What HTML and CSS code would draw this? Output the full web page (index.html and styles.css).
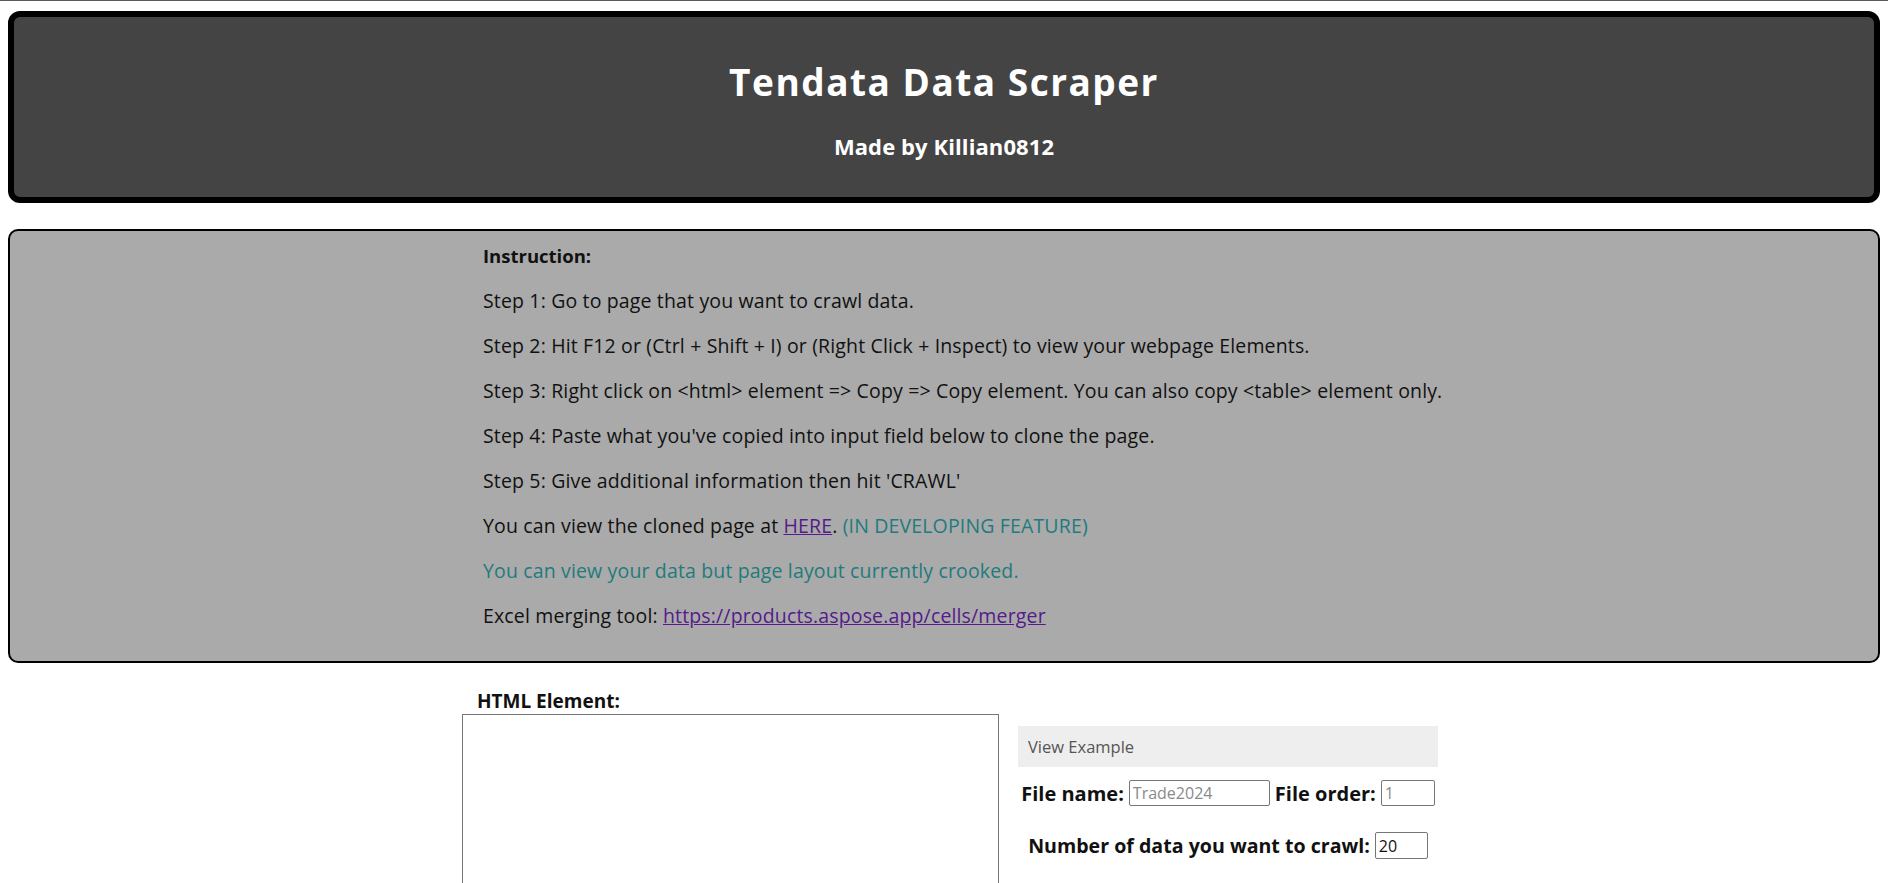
FILE: index.html
```html
<!DOCTYPE html>
<html lang="en">
<head>
<meta charset="utf-8">
<title>Tendata Data Scraper</title>
<link rel="stylesheet" href="styles.css">
</head>
<body>
<div class="frame">
  <header class="banner">
    <h1 class="title">Tendata Data Scraper</h1>
    <h3 class="byline">Made by Killian0812</h3>
  </header>

  <section class="guide">
    <div class="guide-inner">
      <p class="guide-head">Instruction:</p>
      <p>Step 1: Go to page that you want to crawl data.</p>
      <p>Step 2: Hit F12 or (Ctrl + Shift + I) or (Right Click + Inspect) to view your webpage Elements.</p>
      <p>Step 3: Right click on &lt;html&gt; element =&gt; Copy =&gt; Copy element. You can also copy &lt;table&gt; element only.</p>
      <p>Step 4: Paste what you've copied into input field below to clone the page.</p>
      <p>Step 5: Give additional information then hit 'CRAWL'</p>
      <p>You can view the cloned page at <a class="link" href="#">HERE</a>. <span class="note">(IN DEVELOPING FEATURE)</span></p>
      <p class="note">You can view your data but page layout currently crooked.</p>
      <p>Excel merging tool: <a class="link" href="#">https://products.aspose.app/cells/merger</a></p>
    </div>
  </section>

  <section class="form">
    <div class="html-col">
      <label class="field-label" for="html">HTML Element:</label>
      <textarea class="html-input" id="html"></textarea>
    </div>
    <div class="side">
      <div class="example">View Example</div>
      <div class="row">
        <label class="row-label">File name:</label>
        <input class="box box-name" type="text" placeholder="Trade2024">
        <label class="row-label">File order:</label>
        <input class="box box-order" type="text" placeholder="1">
      </div>
      <div class="row row-count">
        <label class="row-label label-count">Number of data you want to crawl:</label>
        <input class="box box-count" type="text" value="20">
      </div>
    </div>
  </section>
</div>
</body>
</html>
```

FILE: styles.css
```css
html, body {
  margin: 0;
  padding: 0;
  background: #ffffff;
}

body {
  font-family: "Open Sans", "Noto Sans", sans-serif;
  color: #111111;
  overflow: hidden;
}

.frame {
  border-top: 1px solid #5a5a5a;
  padding: 10px 8px 0 8px;
}

.banner {
  background: #444444;
  border: 6px solid #000000;
  border-radius: 12px;
  height: 180px;
  box-sizing: content-box;
  display: flex;
  flex-direction: column;
  align-items: center;
  padding: 0;
}

.title {
  margin: 43px 0 0 0;
  font-size: 37px;
  line-height: 44px;
  font-weight: 700;
  color: #ffffff;
  letter-spacing: 1.5px;
}

.byline {
  margin: 27px 0 0 0;
  font-size: 22px;
  line-height: 30px;
  font-weight: 700;
  color: #ffffff;
  letter-spacing: 0.1px;
}

.guide {
  margin-top: 26px;
  background: #aaaaaa;
  border: 2px solid #000000;
  border-radius: 10px;
  padding: 12px 0 13px 0;
}

.guide-inner {
  width: 922px;
  margin: 0 auto;
}

.guide-inner p {
  margin: 0 0 20px 0;
  font-size: 19.5px;
  line-height: 25px;
  letter-spacing: 0.15px;
  white-space: nowrap;
}

.guide-inner .guide-head {
  font-weight: 700;
  font-size: 18.5px;
  letter-spacing: 0;
}

.note {
  color: #1f7b7d;
}

.link {
  color: #551a8b;
  text-decoration: underline;
}

.form {
  width: 976px;
  margin: 26px auto 0 auto;
  padding-left: 12px;
  display: flex;
  align-items: flex-start;
  gap: 19px;
}

.html-col {
  display: flex;
  flex-direction: column;
  width: 537px;
}

.field-label {
  font-weight: 700;
  font-size: 19px;
  line-height: 25px;
  padding-left: 15px;
}

.html-input {
  box-sizing: border-box;
  width: 537px;
  height: 320px;
  border: 1px solid #767676;
  resize: none;
  margin: 0;
}

.side {
  width: 420px;
  margin-top: 37px;
}

.example {
  background: #eeeeee;
  height: 41px;
  line-height: 41px;
  padding-left: 10px;
  font-size: 16.5px;
  color: #555555;
}

.row {
  display: flex;
  justify-content: center;
  align-items: center;
  gap: 5px;
  margin-top: 13px;
  height: 26px;
}

.row-count {
  margin-top: 26px;
  height: 27px;
}

.row-label {
  font-weight: 700;
  font-size: 20px;
  line-height: 25px;
}

.label-count {
  font-size: 19.6px;
}

.box {
  box-sizing: border-box;
  height: 26px;
  border: 1px solid #767676;
  border-radius: 2px;
  padding: 2px 3px;
  font-family: "Open Sans", "Noto Sans", sans-serif;
  font-size: 16px;
  color: #111111;
  margin: 0;
}

.box::placeholder {
  color: #8a8a8a;
}

.box-name {
  width: 141px;
}

.box-order {
  width: 54px;
}

.box-count {
  width: 53px;
  height: 27px;
}
```
